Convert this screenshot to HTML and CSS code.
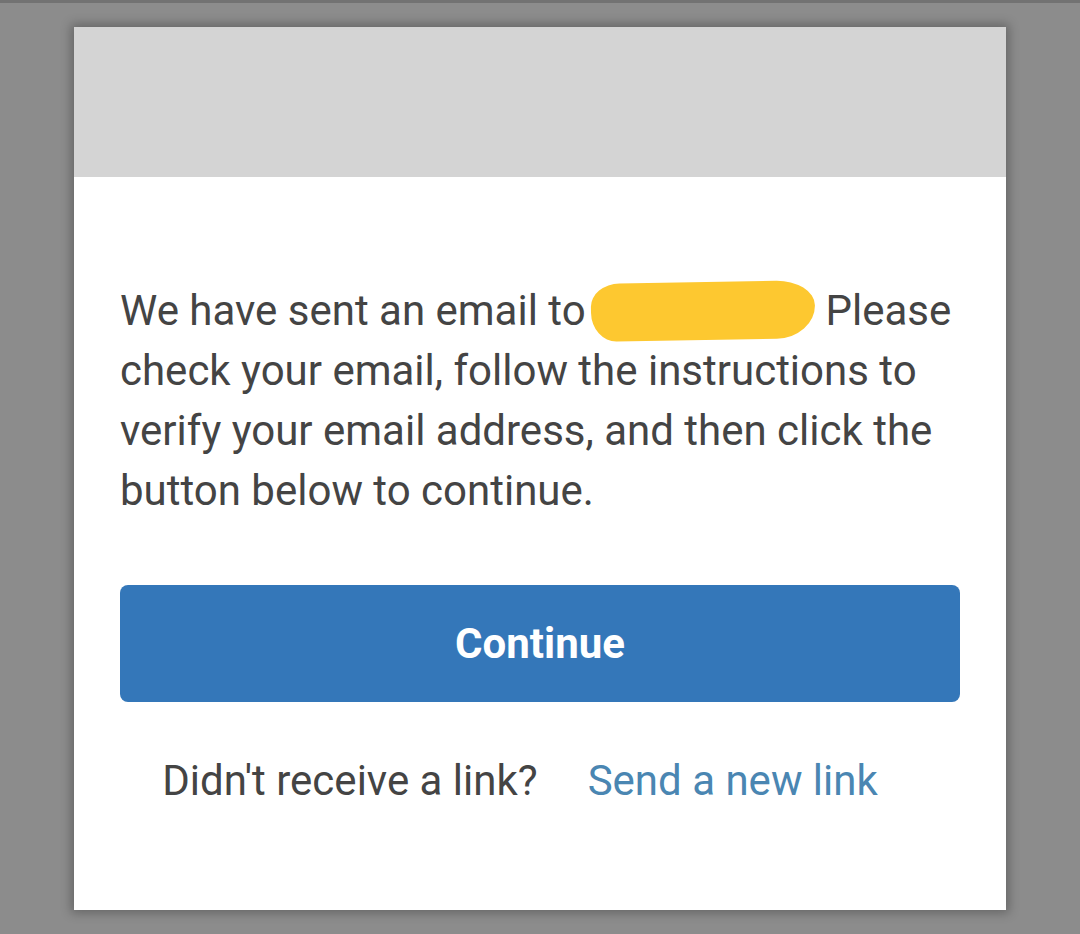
FILE: index.html
```html
<!DOCTYPE html>
<html lang="en">
<head>
  <meta charset="UTF-8" />
  <meta name="viewport" content="width=device-width, initial-scale=1.0" />
  <title>Verify your email</title>
  <link rel="stylesheet" href="styles.css">
</head>
<body>
  <div class="topline"></div>
  <div class="card">
    <div class="card-head"></div>
    <div class="card-body">
      <p class="message">We have sent an email to <span class="redacted"></span> Please check your email, follow the instructions to verify your email address, and then click the button below to continue.</p>
      <button class="btn">Continue</button>
      <div class="resend">
        <span>Didn't receive a link?</span>
        <a href="#" class="link">Send a new link</a>
      </div>
    </div>
  </div>
</body>
</html>
```

FILE: styles.css
```css
/* Reset */
* {
  box-sizing: border-box;
  margin: 0;
  padding: 0;
}
body {
  font-family: Roboto, 'Liberation Sans', sans-serif;
  background: #8c8c8c;
  height: 934px;
  overflow: hidden;
}
.topline {
  height: 3px;
  background: #727272;
}
/* Card */
.card {
  width: 932px;
  height: 883px;
  margin: 24px 0 0 74px;
  background: #fff;
  box-shadow: 0 0 10px 3px rgba(0, 0, 0, 0.28);
}
.card-head {
  height: 150px;
  background: #d4d4d4;
}
.card-body {
  padding: 104px 46px 0;
}
.message {
  font-size: 42px;
  line-height: 60px;
  color: #444;
}
.redacted {
  display: inline-block;
  width: 224px;
  height: 58px;
  margin-left: -5px;
  vertical-align: -15px;
  background: #fdc830;
  border-radius: 30px 40px 40px 26px / 24px 26px 34px 30px;
  transform: rotate(-1deg);
}
/* Button */
.btn {
  display: block;
  width: 100%;
  height: 117px;
  margin-top: 64px;
  border: none;
  border-radius: 8px;
  background: #3477b9;
  color: #fff;
  font-family: inherit;
  font-size: 42px;
  font-weight: 700;
  cursor: pointer;
}
/* Resend row */
.resend {
  display: flex;
  justify-content: center;
  gap: 50px;
  padding-right: 40px;
  margin-top: 57px;
  font-size: 42px;
  line-height: 44px;
  color: #444;
}
.link {
  color: #4a86b2;
  text-decoration: none;
}
```
